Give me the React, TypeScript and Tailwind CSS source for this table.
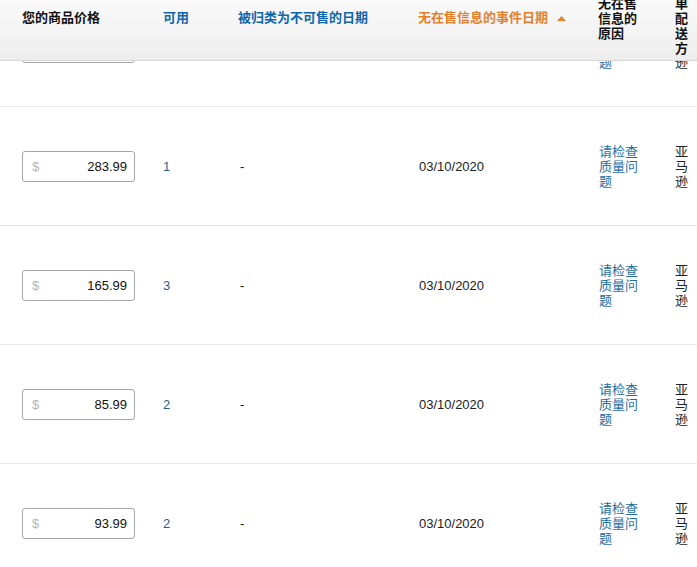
import React from "react";

const rows = [
  { price: "0.00", qty: "1" },
  { price: "283.99", qty: "1" },
  { price: "165.99", qty: "3" },
  { price: "85.99", qty: "2" },
  { price: "93.99", qty: "2" },
];

const font = {
  fontFamily: '"Liberation Sans", Arial, "Noto Sans CJK SC", sans-serif',
};

function Row({ price, qty }: { price: string; qty: string }) {
  return (
    <div className="flex h-[119px] items-center border-b border-[#e7e7e7] text-[13px] leading-[15px]">
      <div className="w-[163px] shrink-0 pl-[22px]">
        <div className="flex h-[31px] w-[113px] items-center justify-between rounded-[3px] border border-[#a6a6a6] bg-white pl-[9px] pr-[7px]">
          <span className="text-[#b4b4b4]">$</span>
          <span className="text-[#111]">{price}</span>
        </div>
      </div>
      <div className="w-[75px] shrink-0 text-[#2b5f8a]">{qty}</div>
      <div className="w-[180px] shrink-0 pl-[2px] text-[#111]">-</div>
      <div className="w-[180px] shrink-0 pl-[1px] text-[#222]">03/10/2020</div>
      <div className="w-[77px] shrink-0 pl-[1px]">
        <div className="w-[40px] text-[#1f6ea3]">请检查质量问题</div>
      </div>
      <div className="w-[14px] shrink-0 text-[#222]">亚马逊</div>
    </div>
  );
}

export default function App() {
  return (
    <div
      className="relative h-[567px] w-[697px] overflow-hidden bg-white"
      style={font}
    >
      <div className="-mt-[12px]">
        {rows.map((r, i) => (
          <Row key={i} price={r.price} qty={r.qty} />
        ))}
      </div>

      <div className="absolute left-0 top-0 flex h-[61px] w-full items-start border-b border-[#d6d6d6] bg-gradient-to-b from-[#fafafa] to-[#ededed] text-[13px] font-bold leading-[15px]">
        <div className="w-[163px] shrink-0 pl-[22px] pt-[10px] text-[#111]">
          您的商品价格
        </div>
        <div className="w-[75px] shrink-0 pt-[10px] text-[#0f66ad]">可用</div>
        <div className="w-[180px] shrink-0 pt-[10px] text-[#0f66ad]">
          被归类为不可售的日期
        </div>
        <div className="flex w-[180px] shrink-0 items-center pt-[10px] text-[#e4802a]">
          <span>无在售信息的事件日期</span>
          <svg
            width="9"
            height="5"
            viewBox="0 0 9 5"
            className="ml-[9px] mt-[1px]"
          >
            <polygon points="0,5 4.5,0 9,5" fill="#e4802a" />
          </svg>
        </div>
        <div className="-mt-[4px] w-[77px] shrink-0 text-[#111]">
          <div className="w-[40px]">无在售信息的原因</div>
        </div>
        <div className="-mt-[4px] w-[14px] shrink-0 text-[#111]">单配送方</div>
      </div>
    </div>
  );
}
